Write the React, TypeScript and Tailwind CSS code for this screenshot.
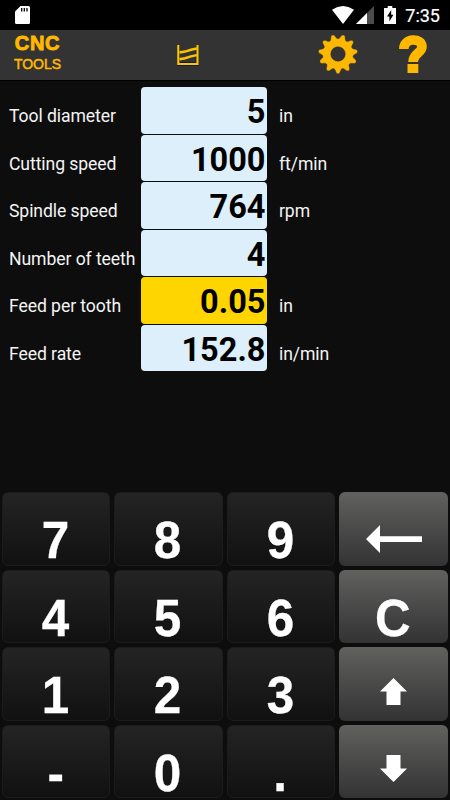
import React, { useState } from 'react';

interface Field {
  label: string;
  value: string;
  unit: string;
}

const initialFields: Field[] = [
  { label: 'Tool diameter', value: '5', unit: 'in' },
  { label: 'Cutting speed', value: '1000', unit: 'ft/min' },
  { label: 'Spindle speed', value: '764', unit: 'rpm' },
  { label: 'Number of teeth', value: '4', unit: '' },
  { label: 'Feed per tooth', value: '0.05', unit: 'in' },
  { label: 'Feed rate', value: '152.8', unit: 'in/min' },
];

const keys = ['7', '8', '9', 'back', '4', '5', '6', 'C', '1', '2', '3', 'up', '-', '0', '.', 'down'];

// Gear outline, 11 rounded teeth with one pointing straight down
const TEETH = 11;
const gearPath = (() => {
  const points: string[] = [];
  const profile: [number, number][] = [[-0.5, 15.2], [-0.35, 15.7], [-0.17, 18.8], [-0.07, 19.7], [0.07, 19.7], [0.17, 18.8], [0.35, 15.7]];
  for (let i = 0; i < TEETH; i++) {
    profile.forEach(([offset, radius]) => {
      const a = Math.PI / 2 + ((i + offset) * 2 * Math.PI) / TEETH;
      points.push(`${(20 + radius * Math.cos(a)).toFixed(2)} ${(20 + radius * Math.sin(a)).toFixed(2)}`);
    });
  }
  return `M${points.join('L')}Z M27.3 20a7.3 7.3 0 1 0-14.6 0a7.3 7.3 0 1 0 14.6 0Z`;
})();

const StatusBar: React.FC = () => (
  <div className="flex h-[30px] shrink-0 items-center bg-black pl-[15px] pr-[10px] text-white">
    <svg className="h-[18px] w-[15px]" viewBox="0 0 15 18">
      <path d="M5.5 0H13.5Q15 0 15 1.5V16.5Q15 18 13.5 18H1.5Q0 18 0 16.5V5.5Z" fill="currentColor" />
      <path d="M6.7 2v3.5M9.3 2v3.5M12 2v3.5" stroke="#000" strokeWidth="1.3" />
    </svg>
    <svg className="ml-auto h-[18px] w-[22px]" viewBox="0 0 22 18">
      <path d="M0 3.8Q11-3.6 22 3.8L11 18Z" fill="currentColor" />
    </svg>
    <svg className="ml-[2px] h-[18px] w-[18px]" viewBox="0 0 18 18">
      <path d="M18 0V18H0Z" fill="#4c4c4c" />
      <path d="M11 7V18H0Z" fill="currentColor" />
    </svg>
    <svg className="ml-[10px] h-[18px] w-[12px]" viewBox="0 0 12 18">
      <path d="M3.7 0H8.3V2H12V18H0V2H3.7Z" fill="currentColor" />
      <path d="M7.2 4L3 10.5H5.4V15.5L9.4 8.7H7.2Z" fill="#000" />
    </svg>
    <span className="ml-[9px] w-[35px] pt-[1px] text-right text-[18px] leading-none whitespace-nowrap [-webkit-text-stroke:0.2px_#fff]">7:35</span>
  </div>
);

const Header: React.FC = () => (
  <header className="grid h-[51px] shrink-0 grid-cols-4 border-b border-black bg-[#333333] text-[#ffb800]">
    <div className="w-[75px] pt-[2px] text-center font-['Liberation_Sans',Arial,sans-serif]">
      <div className="text-[20px] leading-[23px] font-bold tracking-[0.7px] [-webkit-text-stroke:0.9px_#ffb800]">CNC</div>
      <div className="pt-[1px] text-[14px] leading-[17px] [-webkit-text-stroke:0.5px_#ffb800]">TOOLS</div>
    </div>
    <div className="flex items-start justify-end pt-[14px] pr-[26px]">
      <svg className="h-[22px] w-[22px]" viewBox="0 0 22 22" fill="none">
        <path d="M1.3 1V20H20.5V1" stroke="#071833" strokeWidth="3.4" />
        <path d="M1.3 1V20H20.5V1" stroke="#ffc400" strokeWidth="2.2" />
        <path d="M2.5 8.6L8 7.6L14 5.8L19.8 4.5M2.5 15.2L8 14.2L14 12.4L19.8 11.1" stroke="#ffc400" strokeWidth="2.5" />
      </svg>
    </div>
    <div />
    <div className="flex justify-between pt-[4px] pr-[22px]">
      <svg className="-ml-[20px] h-[40px] w-[40px]" viewBox="0 0 40 40">
        <path d={gearPath} fill="#ffb800" fillRule="evenodd" stroke="#24304a" strokeWidth="0.4" strokeLinejoin="round" />
      </svg>
      <svg className="h-[40px] w-[30px]" viewBox="0 0 30 40" fill="none">
        <path d="M5.8 15C5.8 3.2 24 3.6 24 12.8C24 19.2 15 19.2 15 28" stroke="#ffb800" strokeWidth="9.6" />
        <path d="M9.5 30H20.3V39H9.5Z" fill="#ffb800" />
      </svg>
    </div>
  </header>
);

const KeyFace: React.FC<{ name: string }> = ({ name }) => {
  if (name === 'back') {
    return (
      <svg className="mt-[32px] h-[28px] w-[56px]" viewBox="0 0 56 28">
        <path d="M0 14L14 0V11.3H56V17H14V28Z" fill="#fff" />
      </svg>
    );
  }
  if (name === 'up' || name === 'down') {
    return (
      <svg className={`h-[27px] w-[27px] ${name === 'down' ? 'mt-[29px] rotate-180' : 'mt-[30px]'}`} viewBox="0 0 27 27">
        <path d="M13.5 0L27 13.5H20.5V27H6.5V13.5H0Z" fill="#fff" />
      </svg>
    );
  }
  return <span className="mt-[25px] -ml-[1px] scale-x-[0.95] text-[52px] leading-[45px] font-bold [-webkit-text-stroke:0.3px_#fff]">{name}</span>;
};

const App: React.FC = () => {
  const [fields, setFields] = useState(initialFields);
  const [active, setActive] = useState(4);

  const handleKey = (key: string) => {
    if (key === 'up') return setActive(i => Math.max(0, i - 1));
    if (key === 'down') return setActive(i => Math.min(fields.length - 1, i + 1));
    setFields(fields.map((f, i) => {
      if (i !== active) return f;
      if (key === 'C') return { ...f, value: '' };
      if (key === 'back') return { ...f, value: f.value.slice(0, -1) };
      return { ...f, value: f.value + key };
    }));
  };

  return (
    <div className="flex h-screen w-full flex-col overflow-hidden bg-[#0d0d0d] font-['Roboto',sans-serif] text-[#f4f4f4]">
      <StatusBar />
      <Header />

      {/* Fields */}
      <div className="flex flex-col gap-[1px] pt-[6.4px] pl-[9px]">
        {fields.map((f, i) => (
          <div key={f.label} className="flex h-[46.5px]">
            <div className="w-[132.4px] shrink-0 pt-[18.1px] text-[17.6px] leading-[22px] tracking-[-0.08px] whitespace-nowrap">{f.label}</div>
            <button
              onClick={() => setActive(i)}
              className={`w-[125.6px] rounded-[4px] pt-[4.5px] pr-[1.5px] text-right text-[32.5px] leading-[41px] font-bold text-black ${i === active ? 'bg-[#ffd500]' : 'bg-[#dceffb]'}`}
            >
              {f.value}
            </button>
            <div className="pl-[12px] pt-[18.1px] text-[17.6px] leading-[22px] tracking-[-0.08px]">{f.unit}</div>
          </div>
        ))}
      </div>

      {/* Keypad */}
      <div className="mt-auto grid grid-cols-4 gap-x-[4px] gap-y-[4px] pb-[2px] pl-[1.5px] pr-[2px] font-['Liberation_Sans',Arial,sans-serif] text-white">
        {keys.map((key, i) => (
          <button
            key={key}
            onClick={() => handleKey(key)}
            className={`flex h-[73.5px] items-start justify-center rounded-[6px] border bg-linear-to-b ${i % 4 === 3 ? 'border-transparent bg-origin-border from-[#616160] to-[#333333]' : 'border-[#1c1c1c] from-[#242424] to-[#111111]'}`}
          >
            <KeyFace name={key} />
          </button>
        ))}
      </div>
    </div>
  );
};

export default App;
